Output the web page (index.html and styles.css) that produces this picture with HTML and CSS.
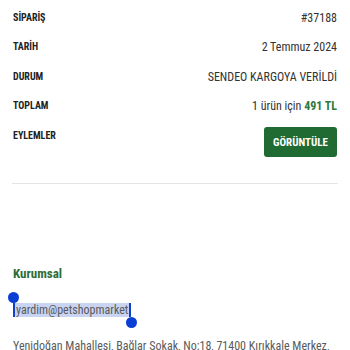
FILE: index.html
```html
<!DOCTYPE html>
<html lang="tr">
<head>
<meta charset="utf-8">
<link rel="stylesheet" href="styles.css">
</head>
<body>
<div class="page">
  <div class="rows">
    <div class="row"><span class="label">SİPARİŞ</span><span class="value">#37188</span></div>
    <div class="row"><span class="label">TARİH</span><span class="value">2 Temmuz 2024</span></div>
    <div class="row"><span class="label">DURUM</span><span class="value">SENDEO KARGOYA VERİLDİ</span></div>
    <div class="row"><span class="label">TOPLAM</span><span class="value">1 ürün için <b class="price">491 TL</b></span></div>
    <div class="row-actions"><span class="label label-top">EYLEMLER</span><button class="btn">GÖRÜNTÜLE</button></div>
  </div>
  <hr class="divider">
  <div class="footer">
    <div class="heading">Kurumsal</div>
    <div class="email"><span class="sel">yardim@petshopmarket</span><span class="h1"></span><span class="h2"></span></div>
    <div class="address">Yenidoğan Mahallesi, Bağlar Sokak, No:18, 71400 Kırıkkale Merkez,</div>
  </div>
</div>
</body>
</html>
```
FILE: styles.css
```css
html, body { margin: 0; padding: 0; background: #fff; }
body { font-family: "Roboto Condensed", "Roboto", sans-serif; color: #333; }
.page { padding: 0 13px; width: 324px; }
.rows { display: flex; flex-direction: column; }
.row { display: flex; justify-content: space-between; align-items: center; height: 29.5px; }
.row:first-child { margin-top: 3px; }
.label { font-size: 10px; font-weight: 700; color: #222; line-height: 12px; }
.value { font-size: 12px; color: #333; }
.price { color: #2f7a3a; font-weight: 700; }
.row-actions { display: flex; justify-content: space-between; align-items: flex-start; margin-top: 6px; }
.label-top { margin-top: 3px; }
.btn { background: #1f6b31; color: #fff; border: 0; border-radius: 3px; font-family: inherit; font-weight: 700; font-size: 11px; width: 73px; height: 30px; padding: 0; }
.divider { border: 0; border-top: 1px solid #e4e4e4; margin: 26px -1px 0 -1px; }
.footer { padding-top: 82px; }
.heading { color: #2c6e36; font-size: 13px; font-weight: 700; line-height: 16px; }
.email { position: relative; margin-top: 20px; font-size: 12px; color: #5a5a5a; height: 16px; line-height: 16px; }
.sel { background: #c9d4f2; padding: 0 1px; border-left: 2px solid #1040d0; border-right: 2px solid #1040d0; }
.h1, .h2 { position: absolute; width: 11px; height: 11px; border-radius: 50%; background: #0b3fd4; }
.h1 { left: -5px; top: -10px; }
.h2 { left: 113px; top: 15px; }
.address { margin-top: 20px; font-size: 12px; color: #5a5a5a; line-height: 16px; white-space: nowrap; }
```
